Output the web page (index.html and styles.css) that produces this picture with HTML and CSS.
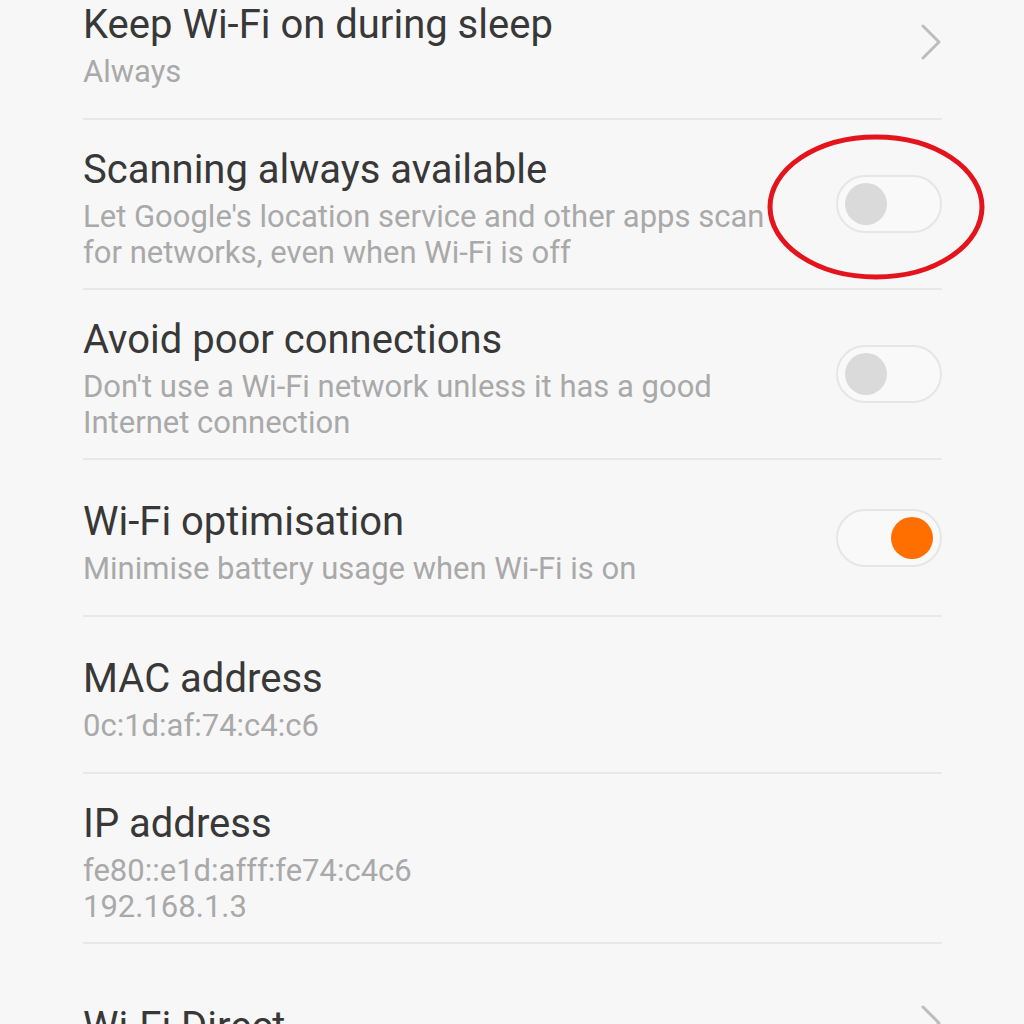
FILE: index.html
```html
<!DOCTYPE html>
<html>
<head>
<meta charset="utf-8">
<link rel="stylesheet" href="styles.css">
</head>
<body>
<div class="list">
  <div class="row">
    <div class="text">
      <div class="title">Keep Wi-Fi on during sleep</div>
      <div class="sub">Always</div>
    </div>
    <svg class="chev" width="22" height="36" viewBox="0 0 22 36"><polyline points="3,2 19,18 3,34" fill="none" stroke="#bdbdbd" stroke-width="3" stroke-linecap="round" stroke-linejoin="round"/></svg>
  </div>
  <div class="row">
    <div class="text">
      <div class="title">Scanning always available</div>
      <div class="sub">Let Google's location service and other apps scan for networks, even when Wi-Fi is off</div>
    </div>
    <div class="toggle"><span class="knob"></span></div>
    <svg class="mark" width="230" height="160" viewBox="0 0 230 160"><ellipse cx="115" cy="80" rx="106" ry="70" fill="none" stroke="#e4141d" stroke-width="5"/></svg>
  </div>
  <div class="row">
    <div class="text">
      <div class="title">Avoid poor connections</div>
      <div class="sub">Don't use a Wi-Fi network unless it has a good Internet connection</div>
    </div>
    <div class="toggle"><span class="knob"></span></div>
  </div>
  <div class="row">
    <div class="text">
      <div class="title">Wi-Fi optimisation</div>
      <div class="sub">Minimise battery usage when Wi-Fi is on</div>
    </div>
    <div class="toggle on"><span class="knob"></span></div>
  </div>
  <div class="row">
    <div class="text">
      <div class="title">MAC address</div>
      <div class="sub">0c:1d:af:74:c4:c6</div>
    </div>
  </div>
  <div class="row">
    <div class="text">
      <div class="title">IP address</div>
      <div class="sub">fe80::e1d:afff:fe74:c4c6<br>192.168.1.3</div>
    </div>
  </div>
  <div class="row">
    <div class="text">
      <div class="title">Wi-Fi Direct</div>
    </div>
    <svg class="chev" width="22" height="36" viewBox="0 0 22 36"><polyline points="3,2 19,18 3,34" fill="none" stroke="#bdbdbd" stroke-width="3" stroke-linecap="round" stroke-linejoin="round"/></svg>
  </div>
</div>
</body>
</html>
```

FILE: styles.css
```css
html, body {
  margin: 0;
  padding: 0;
  background: #f7f7f7;
  height: 1024px;
  overflow: hidden;
}
body {
  font-family: Roboto, "Noto Sans", sans-serif;
}
.list {
  margin: -37px 0 0 83px;
  width: 859px;
}
.row {
  position: relative;
  box-sizing: border-box;
  min-height: 157px;
  padding: 27px 0 17px;
  border-bottom: 2px solid #e8e8e8;
  display: flex;
  align-items: center;
  justify-content: space-between;
}
.text {
  max-width: 700px;
}
.title {
  font-size: 40px;
  line-height: 46px;
  color: #383838;
}
.sub {
  margin-top: 6px;
  font-size: 31px;
  line-height: 36px;
  color: #a9a9a9;
}
.chev {
  flex: none;
  margin-top: -8px;
}
.toggle {
  flex: none;
  box-sizing: border-box;
  width: 106px;
  height: 58px;
  margin-top: -10px;
  border: 2px solid #e6e6e6;
  border-radius: 29px;
  background: #f9f9f9;
  display: flex;
  align-items: center;
  padding: 0 7px;
}
.knob {
  width: 42px;
  height: 42px;
  border-radius: 50%;
  background: #dadada;
}
.toggle.on {
  justify-content: flex-end;
}
.toggle.on .knob {
  background: #ff6f00;
}
.mark {
  position: absolute;
  right: -49px;
  top: 50%;
  margin-top: -77px;
}
```
